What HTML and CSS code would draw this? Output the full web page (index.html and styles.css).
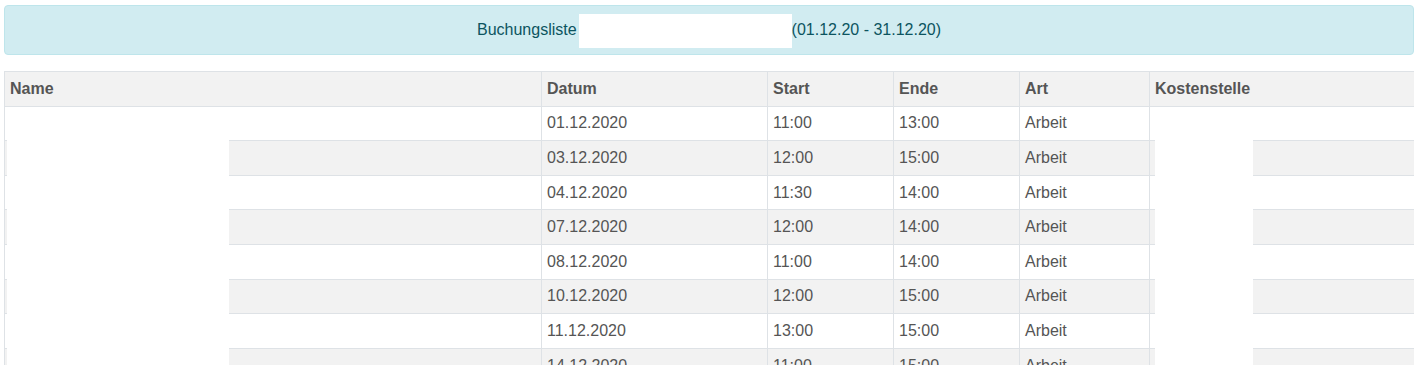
FILE: index.html
```html
<!DOCTYPE html>
<html lang="de">
<head>
<meta charset="utf-8">
<title>Buchungsliste</title>
<link rel="stylesheet" href="styles.css">
</head>
<body>
<div class="page">
  <div class="alert">Buchungsliste<span class="redact-inline"></span>(01.12.20 - 31.12.20)</div>
  <div class="table-wrap">
    <table class="list">
      <colgroup>
        <col class="c-name"><col class="c-datum"><col class="c-start"><col class="c-ende"><col class="c-art"><col class="c-kst">
      </colgroup>
      <thead>
        <tr><th>Name</th><th>Datum</th><th>Start</th><th>Ende</th><th>Art</th><th>Kostenstelle</th></tr>
      </thead>
      <tbody>
        <tr><td></td><td>01.12.2020</td><td>11:00</td><td>13:00</td><td>Arbeit</td><td></td></tr>
        <tr><td></td><td>03.12.2020</td><td>12:00</td><td>15:00</td><td>Arbeit</td><td></td></tr>
        <tr><td></td><td>04.12.2020</td><td>11:30</td><td>14:00</td><td>Arbeit</td><td></td></tr>
        <tr><td></td><td>07.12.2020</td><td>12:00</td><td>14:00</td><td>Arbeit</td><td></td></tr>
        <tr><td></td><td>08.12.2020</td><td>11:00</td><td>14:00</td><td>Arbeit</td><td></td></tr>
        <tr><td></td><td>10.12.2020</td><td>12:00</td><td>15:00</td><td>Arbeit</td><td></td></tr>
        <tr><td></td><td>11.12.2020</td><td>13:00</td><td>15:00</td><td>Arbeit</td><td></td></tr>
        <tr><td></td><td>14.12.2020</td><td>11:00</td><td>15:00</td><td>Arbeit</td><td></td></tr>
      </tbody>
    </table>
    <span class="redact redact-name"></span>
    <span class="redact redact-kst"></span>
  </div>
</div>
</body>
</html>
```
FILE: styles.css
```css
html, body {
  margin: 0;
  padding: 0;
  background: #fff;
}
body {
  font-family: "Liberation Sans", Arial, sans-serif;
  font-size: 16px;
  line-height: 1.5;
  color: #555;
}
.page {
  padding: 5px 4px 0 4px;
}
.alert {
  margin: 0 0 16px 0;
  padding: 12px 20px;
  border: 1px solid #bee5eb;
  border-radius: 4px;
  background: #d1ecf1;
  color: #0c5460;
  text-align: center;
}
.redact-inline {
  display: inline-block;
  width: 213px;
  height: 34px;
  margin: -7px 0 -7px 2px;
  vertical-align: middle;
  background: #fff;
}
.table-wrap {
  position: relative;
  overflow: hidden;
}
.list {
  width: 100%;
  border-collapse: collapse;
  table-layout: fixed;
}
.c-name { width: 537px; }
.c-datum { width: 226px; }
.c-start { width: 126px; }
.c-ende { width: 126px; }
.c-art { width: 130px; }
.c-kst { width: 265px; }
.list th,
.list td {
  padding: 4.8px 5px;
  border: 1px solid #dee2e6;
  text-align: left;
  vertical-align: top;
  height: 24px;
}
.list th {
  font-weight: bold;
  background: #f2f2f2;
}
.list tbody tr:nth-child(even) td {
  background: #f2f2f2;
}
.redact {
  position: absolute;
  top: 36px;
  bottom: 0;
  background: #fff;
}
.redact-name {
  left: 3px;
  width: 222px;
}
.redact-kst {
  left: 1151px;
  width: 98px;
}
```
